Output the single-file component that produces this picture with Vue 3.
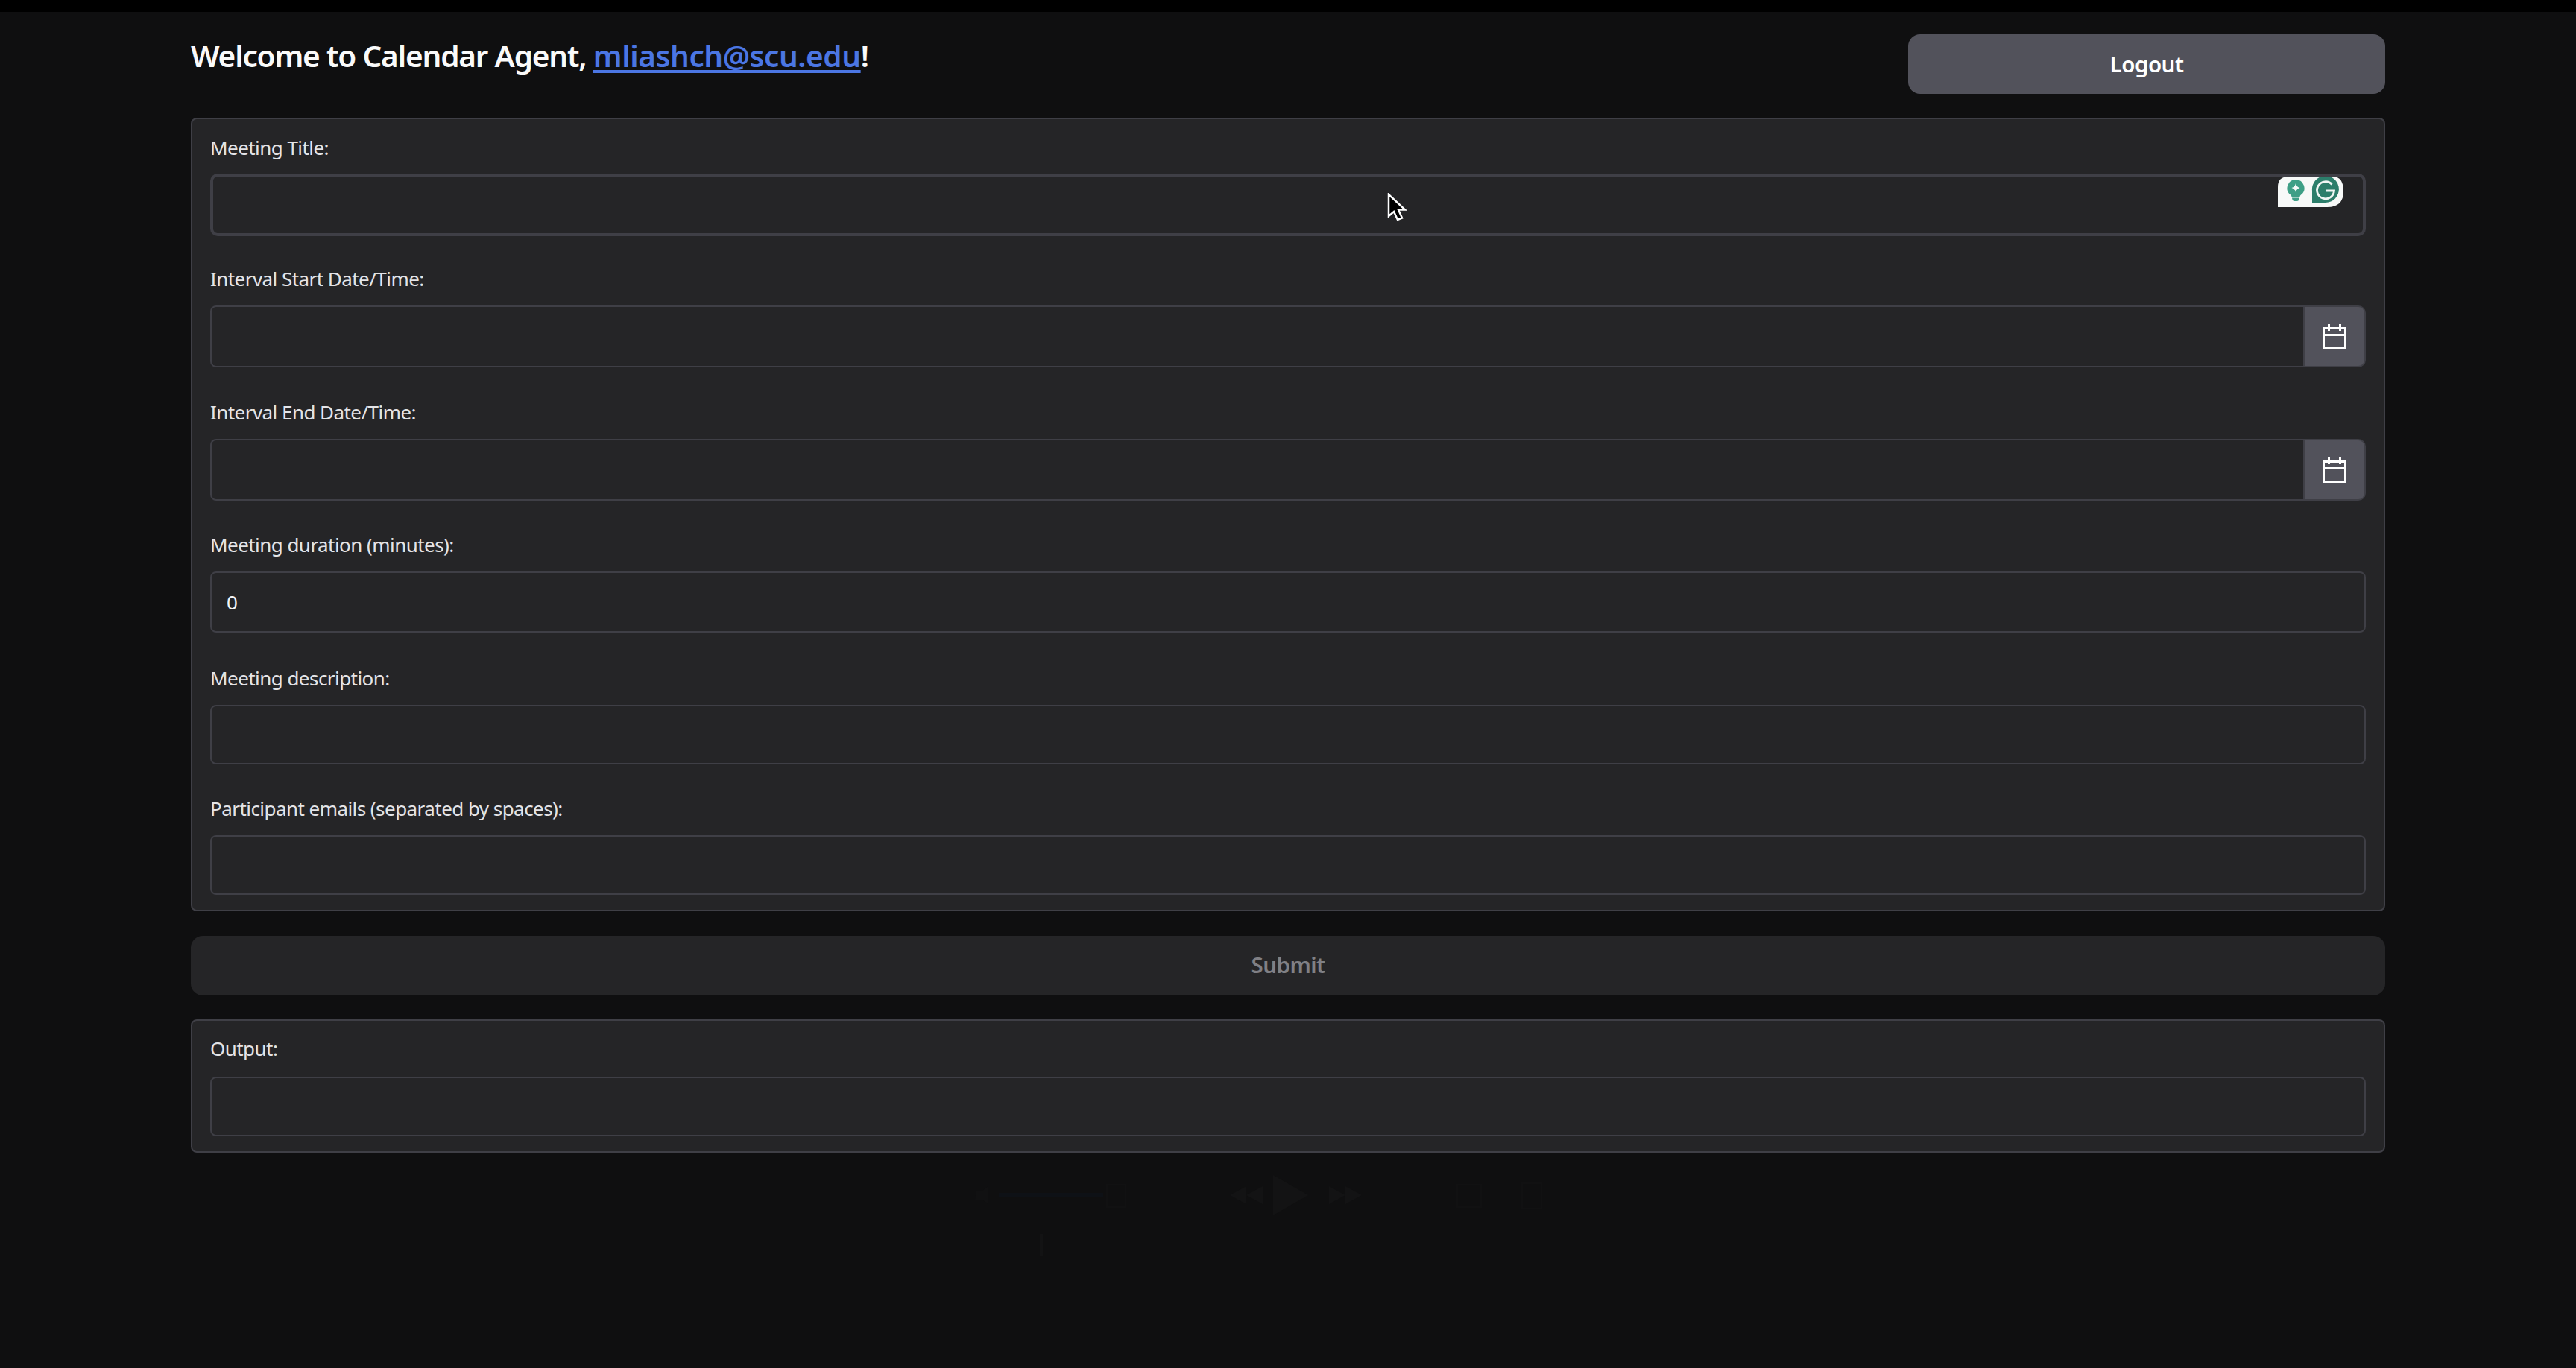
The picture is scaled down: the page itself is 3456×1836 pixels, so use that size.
<script setup>
const fields = [
  { label: 'Meeting Title:', cls: 'f-title', focus: true },
  { label: 'Interval Start Date/Time:', cls: 'f-start', date: true },
  { label: 'Interval End Date/Time:', cls: 'f-end', date: true },
  { label: 'Meeting duration (minutes):', cls: 'f-dur', value: '0' },
  { label: 'Meeting description:', cls: 'f-desc' },
  { label: 'Participant emails (separated by spaces):', cls: 'f-mail' },
]
</script>

<template>
  <div class="page">
    <div class="topbar"></div>
    <main class="wrap">
      <header class="head">
        <h1 class="welcome">Welcome to Calendar Agent, <a class="mail" href="#">mliashch@scu.edu</a>!</h1>
        <button class="logout">Logout</button>
      </header>

      <section class="panel form">
        <div v-for="f in fields" :key="f.label" class="field" :class="f.cls">
          <label class="lab">{{ f.label }}</label>
          <div class="box" :class="{ focus: f.focus, dated: f.date }">
            <span v-if="f.value" class="val">{{ f.value }}</span>
            <svg v-if="f.focus" class="gram" viewBox="0 0 88 41" width="88" height="41">
              <path d="M0 41V14Q0 0 14 0H74Q88 0 88 20 88 41 66 41Z" fill="#f7f9f8" />
              <path d="M24 4a11.500 11.500 0 0 0-7 20.600q1.500 1.200 1.500 2.400h11q0-1.200 1.500-2.400A11.500 11.500 0 0 0 24 4Z" fill="#3e9f86" />
              <path d="M19 28.500h10q-.4 4.500-3.500 4.500h-3q-3.100 0-3.500-4.500Z" fill="#3e9f86" />
              <path d="M24 9q1 5 5.500 6-4.500 1-5.500 6-1-5-5.500-6 4.500-1 5.500-6Z" fill="#f7f9f8" />
              <path d="M46 35V19a18 18 0 1 1 18 16Z" fill="#2c7e6b" />
              <path d="M72.500 10.500A11.500 11.500 0 1 0 75.500 19H65" fill="none" stroke="#f0f6f4" stroke-width="2.800" />
            </svg>
          </div>
          <button v-if="f.date" class="pick" aria-label="Pick date">
            <svg viewBox="0 0 32 34" width="32" height="34" fill="none" stroke="#fff" stroke-width="3">
              <rect x="1.500" y="5.500" width="29" height="27" />
              <path d="M0 14.500h32M8.500 0v9M23.500 0v9" />
            </svg>
          </button>
        </div>
      </section>

      <button class="submit">Submit</button>

      <section class="panel out">
        <label class="lab">Output:</label>
        <div class="box"></div>
      </section>
    </main>

    <svg class="ghost" viewBox="0 0 900 120" width="900" height="120" fill="#131314">
      <rect x="40" y="29" width="140" height="6" fill="#0e1116" />
      <path d="M10 26h8l8-6v24l-8-6h-10Z" fill="#111112" />
      <rect x="185" y="18" width="25" height="30" fill="none" stroke="#111112" stroke-width="2" />
      <path d="M372 32l22-12v24ZM350 32l22-12v24Z" />
      <path d="M408 5l47 27-47 27Z" />
      <path d="M483 20l22 12-22 12ZM505 20l22 12-22 12Z" />
      <rect x="655" y="18" width="32" height="30" fill="none" stroke="#111112" stroke-width="2" />
      <rect x="742" y="16" width="26" height="34" fill="none" stroke="#111112" stroke-width="2" />
      <rect x="95" y="84" width="4" height="30" />
    </svg>

    <svg class="cursor" viewBox="0 0 26 38" width="26" height="38">
      <path d="M2 2v29l7-6 5 11 6-2.500-5-11h9Z" fill="#000" stroke="#fff" stroke-width="2.500" />
    </svg>
  </div>
</template>

<style scoped>
.page {
  position: relative;
  min-height: 1836px;
  overflow: hidden;
  background: #0f0f10;
  font-family: "Noto Sans", "Open Sans", sans-serif;
}
.topbar { height: 16px; background: #000; }
.wrap {
  width: 2944px;
  margin-left: 256px;
  display: flex;
  flex-direction: column;
}
.head {
  display: flex;
  justify-content: space-between;
  align-items: flex-start;
  margin-top: 30px;
  height: 80px;
  margin-bottom: 32px;
}
.welcome {
  margin: 0;
  font-size: 40.500px;
  line-height: 58px;
  font-weight: 600;
  letter-spacing: -1.170px;
  color: #fafafa;
}
.mail {
  color: #4b76e3;
  letter-spacing: -0.450px;
  text-decoration: underline;
  text-decoration-thickness: 4px;
  text-underline-offset: 4px;
}
.logout {
  width: 640px;
  height: 80px;
  border: 0;
  border-radius: 16px;
  background: #52525b;
  color: #fff;
  font: inherit;
  font-size: 29.500px;
  font-weight: 600;
  letter-spacing: -0.500px;
  padding-bottom: 2px;
}
.panel {
  border: 2px solid #3f3f46;
  border-radius: 8px;
  background: #252527;
}
.form { padding: 18px 24px 20px; }
.field { position: relative; display: flex; flex-wrap: wrap; }
.lab {
  display: block;
  width: 100%;
  height: 40px;
  line-height: 40px;
  margin-bottom: 16px;
  font-size: 26px;
  letter-spacing: -0.550px;
  color: #e4e4e7;
}
.f-title .lab { margin-bottom: 15px; }
.box {
  position: relative;
  flex: 1;
  box-sizing: border-box;
  border: 2px solid #3f3f46;
  border-radius: 8px;
  background: #252527;
  display: flex;
  align-items: center;
  padding-left: 20px;
  height: 80px;
}
.focus { height: 84px; border-width: 4px; border-radius: 10px; }
.dated { height: 83px; border-radius: 8px 0 0 8px; border-right: 0; }
.val { font-size: 26px; color: #f4f4f5; }
.gram { position: absolute; top: 0; right: 26px; }
.pick {
  width: 84px;
  height: 83px;
  box-sizing: border-box;
  border: 2px solid #3f3f46;
  border-radius: 0 10px 10px 0;
  background: #52525b;
  padding: 0;
  display: flex;
  align-items: center;
  justify-content: center;
}
.f-title { margin-bottom: 37px; }
.f-start { margin-bottom: 40px; }
.f-end { margin-bottom: 39px; }
.f-dur { margin-bottom: 41px; }
.f-dur .box { height: 82px; }
.f-desc { margin-bottom: 39px; }
.submit {
  height: 80px;
  margin: 33px 0 32px;
  border: 0;
  border-radius: 16px;
  background: #252527;
  color: #808085;
  font: inherit;
  font-size: 29.500px;
  font-weight: 600;
  letter-spacing: -0.500px;
  padding-bottom: 4px;
}
.out { padding: 17px 24px 20px; }
.out .lab { margin-bottom: 18px; }
.ghost { position: absolute; left: 1300px; top: 1572px; }
.cursor { position: absolute; left: 1861px; top: 259px; }
</style>

<style>
html, body { margin: 0; background: #0f0f10; }
</style>
